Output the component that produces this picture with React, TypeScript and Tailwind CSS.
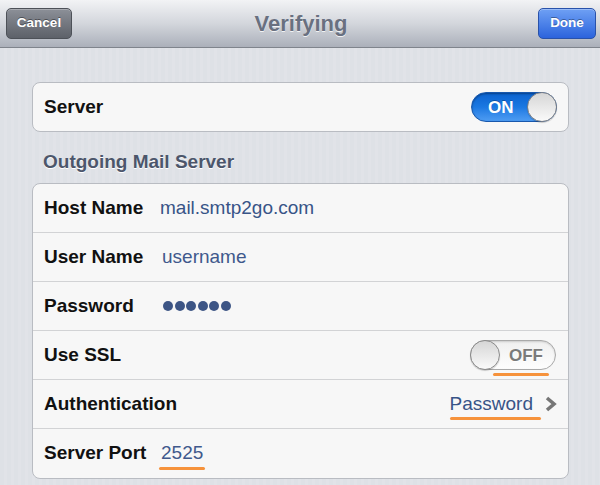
import React from 'react';

const Toggle = ({ on }: { on: boolean }) => {
  if (on) {
    return (
      <div className="relative flex h-[30px] w-[86px] items-center rounded-full border border-[#1858ad] bg-gradient-to-b from-[#0b62cf] via-[#1a78e2] to-[#4d9cf2] shadow-[inset_0_1px_2px_rgba(0,0,0,0.35)]">
        <span className="ml-[16px] text-[17px] font-bold leading-none text-white [text-shadow:0_-1px_0_rgba(0,0,0,0.25)]">ON</span>
        <span className="absolute right-[-1px] top-[-1px] h-[30px] w-[30px] rounded-full border border-[#7d8086] bg-gradient-to-b from-[#d6d6d6] to-[#fafafa] shadow-[0_1px_1px_rgba(0,0,0,0.2)]" />
      </div>
    );
  }
  return (
    <div className="relative flex h-[30px] w-[86px] items-center justify-end rounded-full border border-[#a9a9a9] bg-gradient-to-b from-[#f0f0f0] to-[#fefefe] shadow-[inset_0_1px_2px_rgba(0,0,0,0.15)]">
      <span className="mr-[12px] text-[17px] font-bold leading-none text-[#7a7a7a] [text-shadow:0_1px_0_#fff]">OFF</span>
      <span className="absolute left-[-1px] top-[-1px] h-[30px] w-[30px] rounded-full border border-[#8a8a8a] bg-gradient-to-b from-[#d6d6d6] to-[#fafafa] shadow-[0_1px_1px_rgba(0,0,0,0.2)]" />
    </div>
  );
};

const Row = ({ label, children, last }: { label: string; children?: React.ReactNode; last?: boolean }) => (
  <div className={`flex h-[49px] items-center pl-[11px] pr-[12px] ${last ? '' : 'border-b border-[#d2d3d5]'}`}>
    <span className="w-[117px] shrink-0 whitespace-nowrap text-[19px] font-bold text-[#111]">{label}</span>
    {children}
  </div>
);

export default function App() {
  return (
    <div className="h-[485px] w-[600px] overflow-hidden bg-[#dee1e6] bg-[repeating-linear-gradient(90deg,#dee1e6_0px,#dee1e6_4px,#e1e3e8_4px,#e1e3e8_7px)] font-['Liberation_Sans',Arial,sans-serif]">
      <header className="grid h-[48px] grid-cols-[1fr_auto_1fr] items-center border-b border-[#7f848c] bg-gradient-to-b from-[#f2f3f5] via-[#d3d6dc] to-[#abb0ba] pl-[6px] pr-[4px]">
        <button className="h-[31px] w-[66px] justify-self-start rounded-[5px] border border-[#4d5158] bg-gradient-to-b from-[#8c9098] to-[#5d6169] text-[13.5px] font-bold text-white shadow-[inset_0_1px_0_rgba(255,255,255,0.25)] [text-shadow:0_-1px_0_rgba(0,0,0,0.4)]">
          Cancel
        </button>
        <h1 className="text-[22px] font-bold text-[#697080] [text-shadow:0_1px_0_rgba(255,255,255,0.8)]">Verifying</h1>
        <button className="h-[31px] w-[58px] justify-self-end rounded-[5px] border border-[#2952aa] bg-gradient-to-b from-[#6fa0f4] to-[#2c63dc] text-[13.5px] font-bold text-white shadow-[inset_0_1px_0_rgba(255,255,255,0.3)] [text-shadow:0_-1px_0_rgba(0,0,0,0.35)]">
          Done
        </button>
      </header>

      <main className="pl-[32px] pr-[31px] pt-[34px]">
        <section className="flex h-[50px] items-center justify-between rounded-[8px] border border-[#b9bcc2] bg-[#f7f7f7] pl-[11px] pr-[11px]">
          <span className="text-[19px] font-bold text-[#111]">Server</span>
          <Toggle on />
        </section>

        <h2 className="mt-[19px] pl-[11px] text-[19px] font-bold leading-[22px] text-[#4c566b] [text-shadow:0_1px_0_#fff]">
          Outgoing Mail Server
        </h2>

        <section className="mt-[10px] rounded-[8px] border border-[#b9bcc2] bg-[#f7f7f7]">
          <Row label="Host Name">
            <span className="ml-[-1px] text-[19px] text-[#385487]">mail.smtp2go.com</span>
          </Row>
          <Row label="User Name">
            <span className="ml-[1px] text-[19px] text-[#40598c]">username</span>
          </Row>
          <Row label="Password">
            <span className="ml-[2px] flex gap-[1.6px]">
              {Array.from({ length: 6 }).map((_, i) => (
                <span key={i} className="h-[10px] w-[10px] rounded-full bg-[#3d5585]" />
              ))}
            </span>
          </Row>
          <Row label="Use SSL">
            <div className="relative ml-auto">
              <Toggle on={false} />
              <span className="absolute left-[23px] top-[33px] h-[3px] w-[56px] rounded-full bg-[#f6923b]" />
            </div>
          </Row>
          <Row label="Authentication">
            <div className="ml-auto flex items-center">
              <span className="relative text-[19px] text-[#385487]">
                Password
                <span className="absolute left-0 top-[27px] h-[3px] w-[91px] rounded-full bg-[#f6923b]" />
              </span>
              <svg className="ml-[12px] mr-[-1px] shrink-0" width="12" height="16" viewBox="0 0 12 16">
                <polyline points="2,2 9,8 2,14" fill="none" stroke="#767676" strokeWidth="3.6" />
              </svg>
            </div>
          </Row>
          <Row label="Server Port" last>
            <span className="relative ml-[0px] text-[19px] text-[#40598c]">
              2525
              <span className="absolute left-[-2px] top-[28px] h-[3px] w-[46px] rounded-full bg-[#f6923b]" />
            </span>
          </Row>
        </section>
      </main>
    </div>
  );
}
